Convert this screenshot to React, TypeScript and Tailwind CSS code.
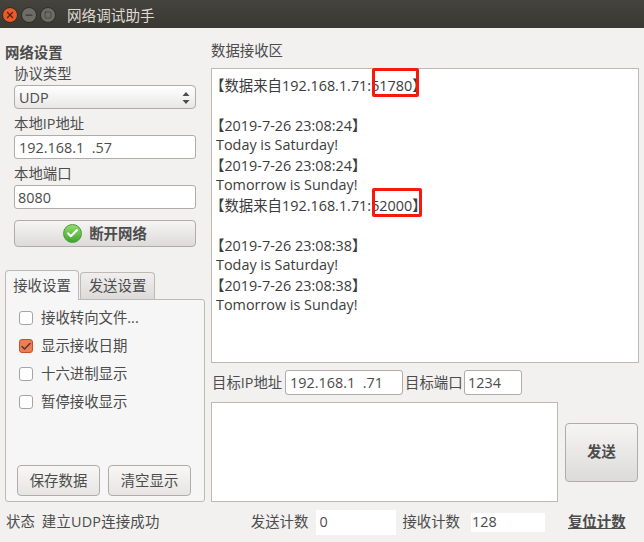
import { Check, Minus, Square, X } from "lucide-react";

const FONT = "font-['Open_Sans','Noto_Sans_CJK_SC',sans-serif]";

const receiveLines = [
  "【数据来自192.168.1.71:51780】",
  "",
  "【2019-7-26 23:08:24】",
  "Today is Saturday!",
  "【2019-7-26 23:08:24】",
  "Tomorrow is Sunday!",
  "【数据来自192.168.1.71:52000】",
  "",
  "【2019-7-26 23:08:38】",
  "Today is Saturday!",
  "【2019-7-26 23:08:38】",
  "Tomorrow is Sunday!",
];

const options = [
  { label: "接收转向文件...", checked: false },
  { label: "显示接收日期", checked: true },
  { label: "十六进制显示", checked: false },
  { label: "暂停接收显示", checked: false },
];

function TextField({ value, className }: { value: string; className: string }) {
  return (
    <div className={`flex items-center rounded-[3px] border border-[#b0aca8] bg-white px-[3px] pt-px ${className}`}>
      {value}
    </div>
  );
}

function Option({ label, checked }: { label: string; checked: boolean }) {
  return (
    <div className="flex h-7 items-center gap-2">
      {checked ? (
        <span className="flex size-[14px] items-center justify-center rounded-[3px] border border-[#c4512a] bg-[#ef7d52]">
          <Check size={13} strokeWidth={3} className="text-[#4a3a34]" />
        </span>
      ) : (
        <span className="size-[14px] rounded-[3px] border border-[#a8a4a0] bg-white" />
      )}
      <span>{label}</span>
    </div>
  );
}

function WindowButton({ children, className }: { children: React.ReactNode; className: string }) {
  return (
    <span className={`flex size-[16px] items-center justify-center rounded-full border border-[#2e2d29] ${className}`}>
      {children}
    </span>
  );
}

function ReceiveLine({ text }: { text: string }) {
  // the bracket glyph sits in the right half of its cell, pull it back to the margin
  const bracket = text.startsWith("【");
  const latin = text !== "" && !bracket;
  return (
    <div className={`h-5 whitespace-pre ${bracket ? "-ml-[6px]" : ""} ${latin ? "leading-[18px]" : "leading-5"}`}>
      {text}
    </div>
  );
}

export default function App() {
  return (
    <div className={`relative flex h-[542px] w-[644px] flex-col overflow-hidden bg-[#f2f1f0] text-[14.4px] leading-5 text-[#4c4c4c] ${FONT}`}>
      <header className="flex h-7 shrink-0 items-center bg-gradient-to-b from-[#45433e] to-[#3a3833] pl-[2px] pt-[2px]">
        <div className="flex gap-[3px]">
          <WindowButton className="bg-[#e9592a] text-[#5c1f0c]">
            <X size={10} strokeWidth={3} />
          </WindowButton>
          <WindowButton className="bg-[#6e6c66] text-[#38362f]">
            <Minus size={10} strokeWidth={3} />
          </WindowButton>
          <WindowButton className="bg-[#6e6c66] text-[#38362f]">
            <Square size={8} strokeWidth={2} />
          </WindowButton>
        </div>
        <span className="ml-[11px] text-[14.6px] text-[#dfdbd2]">网络调试助手</span>
      </header>

      <div className="flex shrink-0">
        <div className="ml-[5px] flex w-[200px] flex-col">
          <div className="mt-[15px] font-bold leading-5">网络设置</div>
          <div className="ml-[9px] w-[182px]">
            <div className="h-5 leading-[22px]">协议类型</div>
            <div className="mt-[2px] flex h-6 items-center justify-between rounded-[4px] border border-[#b0aca8] bg-gradient-to-b from-white to-[#e8e7e6] pl-[4px] pr-[5px] pt-px">
              <span>UDP</span>
              <svg width="8" height="14" viewBox="0 0 8 14" className="fill-[#4c4c4c]">
                <path d="M4 1 7.5 5H.5z" />
                <path d="M4 13 .5 9h7z" />
              </svg>
            </div>
            <div className="mt-1 h-5 leading-[22px]">本地IP地址</div>
            <TextField value="192.168.1  .57" className="mt-[2px] h-6 whitespace-pre pl-[4px]" />
            <div className="mt-[4px] h-5 leading-[22px]">本地端口</div>
            <TextField value="8080" className="mt-[2px] h-6" />
            <button className="mt-[11px] flex h-[27px] w-full items-center justify-center gap-[7px] rounded-[4px] border border-[#b0aca8] bg-gradient-to-b from-[#f6f5f4] to-[#dcdbda] font-bold">
              <span className="flex size-[19px] items-center justify-center rounded-full border border-[#4a9a3a] bg-gradient-to-b from-[#8fdc6a] to-[#3fa52e]">
                <Check size={13} strokeWidth={4} className="text-white" />
              </span>
              断开网络
            </button>
          </div>

          <div className="mt-[23px] flex items-end">
            <div className="z-10 -mb-px flex h-[30px] w-[74px] items-center justify-center rounded-t-[4px] border border-b-0 border-[#bdb9b5] bg-[#f6f6f6]">
              接收设置
            </div>
            <div className="ml-px flex h-[27px] w-[75px] items-center justify-center rounded-t-[4px] border border-b-0 border-[#bdb9b5] bg-gradient-to-b from-[#f0efee] to-[#dcdbda]">
              发送设置
            </div>
          </div>
          <div className="flex h-[203px] w-[200px] flex-col rounded-b-[3px] rounded-tr-[3px] border border-[#bdb9b5] bg-[#f6f6f6] pl-[13px]">
            <div className="mt-[4px]">
              {options.map((o) => (
                <Option key={o.label} label={o.label} checked={o.checked} />
              ))}
            </div>
            <div className="mt-auto mb-[5px] -ml-[2px] flex gap-2">
              <button className="h-[31px] w-[83px] rounded-[4px] border border-[#b0aca8] bg-gradient-to-b from-[#f8f7f6] to-[#e6e5e4]">保存数据</button>
              <button className="h-[31px] w-[83px] rounded-[4px] border border-[#b0aca8] bg-gradient-to-b from-[#f8f7f6] to-[#e6e5e4]">清空显示</button>
            </div>
          </div>
        </div>

        <div className="ml-[6px] flex w-[428px] flex-col">
          <div className="mt-[13px] leading-5">数据接收区</div>
          <div className="mt-[7px] h-[295px] border border-[#bdb9b5] bg-white pl-[4px] pt-[7px] text-[#3c3c3c]">
            {receiveLines.map((line, i) => (
              <ReceiveLine key={i} text={line} />
            ))}
          </div>
          <div className="mt-[7px] flex h-[25px] items-center">
            <span className="w-[74px] whitespace-nowrap pl-px">目标IP地址</span>
            <TextField value="192.168.1  .71" className="h-[25px] w-[118px] whitespace-pre pl-[4px]" />
            <span className="ml-[2px] w-[59px] whitespace-nowrap">目标端口</span>
            <TextField value="1234" className="h-[25px] w-[58px]" />
          </div>
          <div className="mt-[7px] flex items-center">
            <div className="h-[100px] w-[347px] border border-[#bdb9b5] bg-white" />
            <button className="ml-[7px] h-[59px] w-[73px] rounded-[4px] border border-[#b0aca8] bg-gradient-to-b from-[#f6f5f4] to-[#dcdbda] font-bold">发送</button>
          </div>
        </div>
      </div>

      <footer className="flex h-10 shrink-0 items-center pl-[6px]">
        <span className="whitespace-nowrap">状态</span>
        <span className="ml-[7px] w-[209px] whitespace-nowrap tracking-[0.2px]">建立UDP连接成功</span>
        <span className="whitespace-nowrap">发送计数</span>
        <span className="ml-2 flex h-[25px] w-20 items-center bg-white pl-[3px]">0</span>
        <span className="ml-[6px] whitespace-nowrap">接收计数</span>
        <span className="ml-[11px] flex h-[19px] w-[74px] items-center bg-white pl-[1px]">128</span>
        <span className="ml-[23px] whitespace-nowrap font-bold underline">复位计数</span>
      </footer>

      <div className="absolute left-[372px] top-[68px] h-[29px] w-[47px] rounded-[2px] border-[3px] border-[#f5190e]" />
      <div className="absolute left-[372px] top-[188px] h-[29px] w-[50px] rounded-[2px] border-[3px] border-[#f5190e]" />
    </div>
  );
}
